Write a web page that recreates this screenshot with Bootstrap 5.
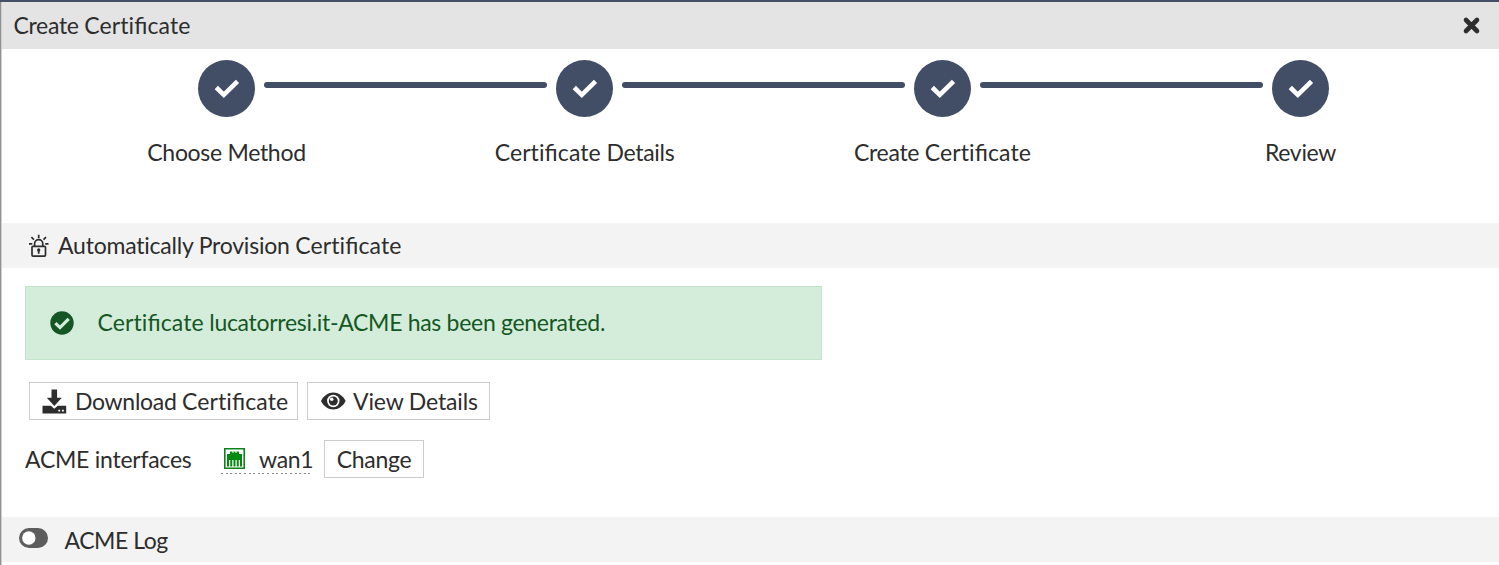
<!DOCTYPE html>
<html lang="en">
<head>
  <meta charset="UTF-8">
  <meta name="viewport" content="width=device-width, initial-scale=1.0">
  <title>Create Certificate</title>
  <link href="https://cdn.jsdelivr.net/npm/bootstrap@5.3.2/dist/css/bootstrap.min.css" rel="stylesheet">
  <style>
    body { font-family: Lato, sans-serif; font-size: 23px; line-height: 36px; letter-spacing: -.3px; color: #2d2d2d; overflow: hidden; }
    svg { display: block; flex: none; }
    /* join only the f and i, leave ti apart */
    .cert-word { letter-spacing: .1px; }
    .lig { font-feature-settings: "liga" 1; }
    .wizard { height: 565px; border-top: 2px solid #454f66; }
    .edge { width: 2px; background: linear-gradient(90deg, #929292 50%, #cfcfcf 50%); }
    .title-bar { height: 47px; background: #e4e4e4; padding: 0 18px 0 11.5px; }
    .title-bar > span, .provision > span, .done > span { padding-bottom: 2px; }
    .track { padding: 11px 150px 0 196px; margin-right: 20px; }
    .step-dot { width: 57px; height: 57px; background: #424e66; }
    .step-line { height: 6px; margin: 22px 9px 0; border-radius: 3px; background: #424e66; }
    .step-labels { margin: 17px 19.5px 0 45.5px; }
    .section-bar { height: 45px; background: #f3f3f3; }
    .provision { margin-top: 53px; padding-left: 26px; letter-spacing: -.22px; }
    .done { width: 797px; height: 74px; margin: 18px 0 0 23px; padding: 0 23.5px; color: #155724; background: #d4edda; border: 1px solid #c3e6cb; border-radius: 0; }
    .btn-box { --bs-btn-font-size: 23px; --bs-btn-line-height: 36px; --bs-btn-color: #2d2d2d; --bs-btn-bg: #fff; --bs-btn-border-color: #ccc; --bs-btn-border-radius: 0; --bs-btn-padding-y: 0; --bs-btn-padding-x: 12px; height: 38px; letter-spacing: -.3px; white-space: nowrap; }
    .btn-download { width: 269px; }
    .btn-view { width: 183px; letter-spacing: -.15px; }
    .btn-change { width: 100px; padding-left: 11px; padding-right: 11px; }
    .actions { margin: 22px 0 0 27px; gap: 9px; }
    .interfaces { margin: 20px 0 0 23px; }
    .interface-name { width: 167px; margin-right: 29px; padding-top: 1px; letter-spacing: -.25px; }
    .port { width: 92px; height: 34px; margin-right: 11px; padding-left: 3px; gap: 14px; background: repeating-linear-gradient(90deg, #888 0 2px, transparent 2px 4.6px) 0 33px / 100% 1px no-repeat; }
    .port > span { padding-top: 1px; }
    .log-bar { margin-top: 39px; padding-left: 17px; letter-spacing: -.45px; }
    .log-bar svg { margin-right: 15.5px; margin-bottom: 3px; }
  </style>
</head>
<body>
  <div class="wizard d-flex">
    <div class="edge flex-shrink-0"></div>
    <main class="flex-grow-1">
      <header class="title-bar d-flex align-items-center justify-content-between">
        <span>Create <span class="cert-word">Certi<i class="lig fst-normal">fi</i>cate</span></span>
        <svg width="19" height="19" viewBox="0 0 19 19" stroke="#2d2d2d" stroke-width="4.6" stroke-linecap="round"><path d="M4 4 15 15M15 4 4 15"/></svg>
      </header>

      <!-- Progress -->
      <div class="track d-flex">
        <div class="step-dot rounded-circle d-flex align-items-center justify-content-center">
          <svg width="26" height="20" viewBox="0 0 26 20" fill="none" stroke="#fff" stroke-width="4.6"><path d="M2.3 8.5 9.8 15.8 23.5 2.3"/></svg>
        </div>
        <div class="step-line flex-fill"></div>
        <div class="step-dot rounded-circle d-flex align-items-center justify-content-center">
          <svg width="26" height="20" viewBox="0 0 26 20" fill="none" stroke="#fff" stroke-width="4.6"><path d="M2.3 8.5 9.8 15.8 23.5 2.3"/></svg>
        </div>
        <div class="step-line flex-fill"></div>
        <div class="step-dot rounded-circle d-flex align-items-center justify-content-center">
          <svg width="26" height="20" viewBox="0 0 26 20" fill="none" stroke="#fff" stroke-width="4.6"><path d="M2.3 8.5 9.8 15.8 23.5 2.3"/></svg>
        </div>
        <div class="step-line flex-fill"></div>
        <div class="step-dot rounded-circle d-flex align-items-center justify-content-center">
          <svg width="26" height="20" viewBox="0 0 26 20" fill="none" stroke="#fff" stroke-width="4.6"><path d="M2.3 8.5 9.8 15.8 23.5 2.3"/></svg>
        </div>
      </div>
      <div class="step-labels row g-0 text-center">
        <div class="col">Choose Method</div>
        <div class="col"><span class="cert-word">Certi<i class="lig fst-normal">fi</i>cate</span> Details</div>
        <div class="col">Create <span class="cert-word">Certi<i class="lig fst-normal">fi</i>cate</span></div>
        <div class="col">Review</div>
      </div>

      <div class="section-bar provision d-flex align-items-center">
        <svg class="me-2" width="22" height="24" viewBox="0 0 22 24" fill="none" stroke="#2d2d2d" stroke-width="1.7">
          <rect x="4" y="12.3" width="13.5" height="9.8" rx="1"/>
          <path d="M6.6 12V9.8a4.1 4.1 0 0 1 8.2 0V12M10.7 .8v3.4M3.4 3.1l2.5 2.5M18 3.1l-2.5 2.5M1 9.8h3.3M17.2 9.8h3.3"/>
          <path d="M10.7 16v3.8"/><circle cx="10.7" cy="16" r=".8"/>
        </svg>
        <span>Automatically Provision <span class="cert-word">Certi<i class="lig fst-normal">fi</i>cate</span></span>
      </div>

      <div class="done alert d-flex align-items-center mb-0" role="alert">
        <svg width="24" height="24" viewBox="0 0 24 24"><circle cx="12" cy="12" r="11.7" fill="#155724"/><path d="m5.4 12.2 4.6 4.4 8.7-8.7" fill="none" stroke="#d4edda" stroke-width="3.2"/></svg>
        <span class="ms-4"><span class="cert-word">Certi<i class="lig fst-normal">fi</i>cate</span> lucatorresi.it-ACME has been generated.</span>
      </div>

      <div class="actions d-flex">
        <button type="button" class="btn btn-box btn-download d-flex align-items-center">
          <svg class="me-2" width="25" height="25" viewBox="0 0 25 25" fill="#2d2d2d">
            <path d="M9.5 .5h5.6v8.3h4.7L12.3 17 4.8 8.8h4.7z"/>
            <path fill-rule="evenodd" d="M.5 16.8h8.3l3.5 3 3.5-3h8.4v7.6H.5zM16.3 20.7v1.8h1.8v-1.8zM20 20.7v1.8h1.8v-1.8z"/>
          </svg>
          <span>Download <span class="cert-word">Certi<i class="lig fst-normal">fi</i>cate</span></span>
        </button>
        <button type="button" class="btn btn-box btn-view d-flex align-items-center">
          <svg class="me-1" width="29" height="20" viewBox="0 0 29 20">
            <path d="M1 10C3.8 4.5 8.3 1.5 13.3 1.5S22.800 4.500 25.600 10C22.800 15.500 18.300 18.500 13.300 18.500S3.800 15.500 1 10z" fill="#2d2d2d"/>
            <circle cx="13.3" cy="10" r="6.2" fill="#fff"/><circle cx="13.3" cy="10" r="4.5" fill="#2d2d2d"/><circle cx="11.7" cy="8.3" r="1.8" fill="#fff"/>
          </svg>
          <span>View Details</span>
        </button>
      </div>

      <div class="interfaces d-flex">
        <span class="interface-name text-nowrap">ACME interfaces</span>
        <div class="port d-flex">
          <svg class="mt-2" width="21" height="21" viewBox="0 0 21 21">
            <path d="M.8.8h19.400v19.400H.8z" fill="#fff" stroke="#0f8219" stroke-width="1.600"/>
            <path d="M3 6h3V3.500h2.500v1.500h1V3.500h2v1.500h1V3.500H15V6h3v6H3z" fill="#048a10"/>
            <path d="M4 12v6.500M7.250 12v6.500M10.500 12v6.500M13.750 12v6.500M17 12v6.500" stroke="#048a10" stroke-width="2"/>
          </svg>
          <span>wan1</span>
        </div>
        <button type="button" class="btn btn-box btn-change">Change</button>
      </div>

      <div class="section-bar log-bar d-flex align-items-center">
        <svg width="30" height="20" viewBox="0 0 30 20"><rect width="29" height="20" rx="10" fill="#5d5d5d"/><circle cx="9.8" cy="10" r="6.7" fill="#fff"/></svg>
        <span>ACME Log</span>
      </div>
    </main>
  </div>
  <script src="https://cdn.jsdelivr.net/npm/bootstrap@5.3.2/dist/js/bootstrap.bundle.min.js"></script>
</body>
</html>
